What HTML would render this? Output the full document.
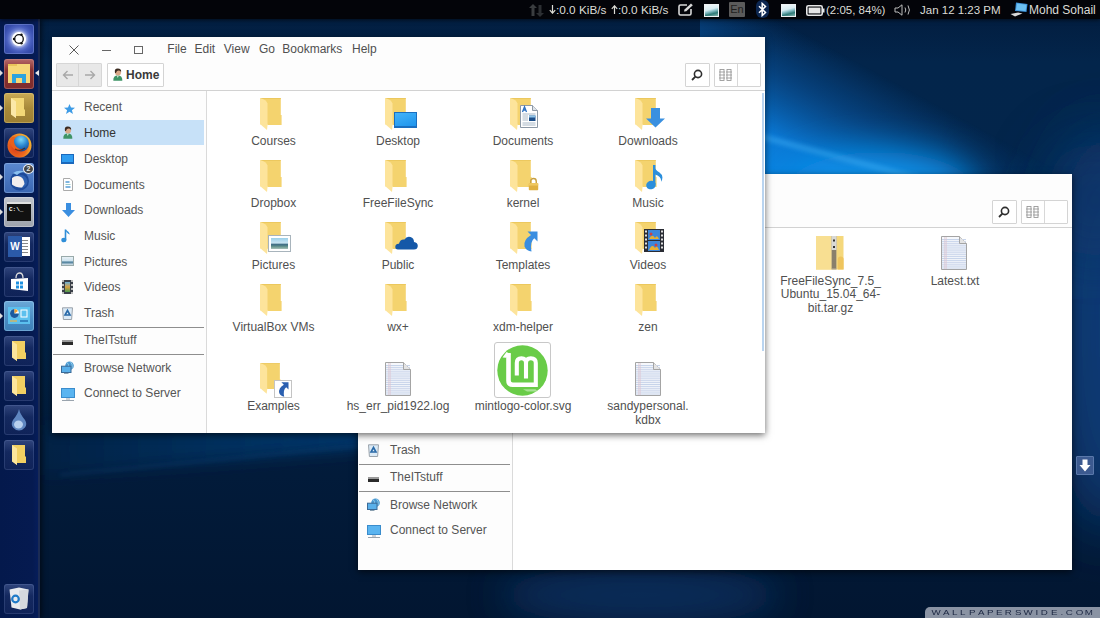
<!DOCTYPE html>
<html><head><meta charset="utf-8"><style>
*{margin:0;padding:0;box-sizing:border-box}
html,body{width:1100px;height:618px;overflow:hidden}
body{position:relative;font-family:"Liberation Sans",sans-serif;background:#03173a}
.a{position:absolute}
.mono{font-family:"Liberation Mono",monospace}
#wall{left:0;top:0;width:1100px;height:618px}
#panel{left:0;top:0;width:1100px;height:19px;background:#030409;box-shadow:0 1px 4px rgba(0,0,0,.6);z-index:2;color:#dcdcd6;font-size:11px;white-space:nowrap}
#panel .t{position:absolute;top:4px;line-height:13px}
#launcher{left:0;top:19px;width:40px;height:599px;background:linear-gradient(90deg,#04194c 0,#051a50 85%,#061d5a 100%);border-right:2px solid #1b2b54;box-shadow:2px 0 5px rgba(0,0,0,.55)}
.tile{position:absolute;left:4px;width:30px;height:30px;border-radius:3px}
.win{background:#fdfdfd;box-shadow:0 2px 7px rgba(0,0,0,.6);overflow:hidden}
.t12{position:absolute;white-space:nowrap;font-size:12px;line-height:14px}
.menu{color:#505050}
.side{color:#555}
.lbl{position:absolute;width:124px;text-align:center;font-size:12px;line-height:13.5px;color:#505050}
.btn{position:absolute;border:1px solid #d4d4d4;background:#fff;border-radius:1px}
</style></head><body>
<svg width="0" height="0" style="position:absolute"><defs>
<symbol id="folder" viewBox="0 0 22 32">
 <path d="M0.5 0 H20.8 V17 H21.6 V27 H7.5 V26.5 H0.5 Z" fill="#f4d36e"/>
 <path d="M0.5 0 H20.8 V0.8 H0.5 Z" fill="#eac65a"/>
 <path d="M0 0 Q6.5 1.5 7.5 5.5 V27.5 L7 32 L0 26 Z" fill="#fde49b"/>
</symbol>
<symbol id="doc" viewBox="0 0 26 34">
 <path d="M0.5 0.5 H18.5 L25.5 7.5 V33.5 H0.5 Z" fill="#f6f8fc" stroke="#a4a4a4" stroke-width="1"/>
 <path d="M1 3.5 H25 M1 5.4 H25 M1 7.3 H25 M1 9.2 H25 M1 11.1 H25 M1 13.0 H25 M1 14.9 H25 M1 16.8 H25 M1 18.7 H25 M1 20.6 H25 M1 22.5 H25 M1 24.4 H25 M1 26.3 H25 M1 28.2 H25 M1 30.1 H25 M1 32.0 H25" stroke="#c2cfe8" stroke-width="0.9"/>
 <path d="M3.8 1 V33 M5.2 1 V33" stroke="#e0c4d0" stroke-width="0.7"/>
 <path d="M18.5 0.5 V7.5 H25.5" fill="#e4e4e4" stroke="#a4a4a4" stroke-width="1"/>
</symbol>
</defs></svg>
<svg id="wall" class="a" width="1100" height="618" viewBox="0 0 1100 618">
<defs>
<linearGradient id="wbase" x1="0" y1="0" x2="0" y2="1">
 <stop offset="0" stop-color="#021b3c"/><stop offset="0.1" stop-color="#03254b"/><stop offset="0.5" stop-color="#03264b"/><stop offset="0.72" stop-color="#021c3c"/><stop offset="1" stop-color="#021631"/>
</linearGradient>
<filter id="b30" x="-50%" y="-50%" width="200%" height="200%"><feGaussianBlur stdDeviation="30"/></filter>
<filter id="b24" x="-50%" y="-50%" width="200%" height="200%"><feGaussianBlur stdDeviation="24"/></filter>
<filter id="b18" x="-50%" y="-50%" width="200%" height="200%"><feGaussianBlur stdDeviation="18"/></filter>
<filter id="b8" x="-50%" y="-50%" width="200%" height="200%"><feGaussianBlur stdDeviation="8"/></filter>
<filter id="b2" x="-50%" y="-50%" width="200%" height="200%"><feGaussianBlur stdDeviation="2"/></filter>
</defs>
<rect width="1100" height="618" fill="url(#wbase)"/>
<linearGradient id="beam" gradientUnits="userSpaceOnUse" x1="887" y1="78" x2="816" y2="210"><stop offset="0" stop-color="#0a5aa8" stop-opacity="0"/><stop offset="0.3" stop-color="#0a5aa8" stop-opacity=".5"/><stop offset="0.7" stop-color="#0a78d4" stop-opacity="1"/><stop offset="1" stop-color="#0a86e4" stop-opacity="1"/></linearGradient><linearGradient id="beamfade" gradientUnits="userSpaceOnUse" x1="700" y1="0" x2="1100" y2="0"><stop offset="0" stop-color="#fff"/><stop offset="0.6" stop-color="#fff"/><stop offset="1" stop-color="#000"/></linearGradient><mask id="bm"><rect x="0" y="0" width="1100" height="618" fill="url(#beamfade)"/></mask><rect x="700" y="19" width="400" height="280" fill="url(#beam)" mask="url(#bm)"/>
<ellipse cx="880" cy="192" rx="95" ry="40" fill="#0c92ea" filter="url(#b18)"/>
<polygon points="740,128 920,176 920,182 740,134" fill="#43b0f5" opacity=".45" filter="url(#b2)"/>
<ellipse cx="1110" cy="330" rx="60" ry="200" fill="#0b3b74" filter="url(#b30)"/><ellipse cx="1095" cy="200" rx="50" ry="60" fill="#073468" filter="url(#b30)" opacity=".6"/>
<linearGradient id="band" x1="0" y1="0" x2="1" y2="0"><stop offset="0" stop-color="#063a70" stop-opacity=".15"/><stop offset="0.5" stop-color="#063a70" stop-opacity=".6"/><stop offset="1" stop-color="#063c74" stop-opacity=".95"/></linearGradient><polygon points="40,425 370,425 370,447 40,476" fill="url(#band)" filter="url(#b8)"/>
<polygon points="60,474 370,444 370,446 60,476" fill="#1a5a98" opacity=".3" filter="url(#b2)"/>
<ellipse cx="640" cy="595" rx="140" ry="30" fill="#083668" filter="url(#b18)" opacity=".7"/>
</svg>
<div id="panel" class="a">
 <svg class="a" style="left:529px;top:4px" width="15" height="13" viewBox="0 0 15 13"><path d="M4 0 L8 4 H5.5 V12 H2.5 V4 H0 Z" fill="#3a3d40"/><path d="M11 13 L7 9 H9.5 V1 H12.5 V9 H15 Z" fill="#2c2f33"/></svg>
 <svg class="a" style="left:549px;top:5px" width="7" height="9" viewBox="0 0 7 9"><path d="M3.5 0 V8 M0.8 5.2 L3.5 8.2 L6.2 5.2" fill="none" stroke="#dcdcd6" stroke-width="1.2"/></svg><span class="t" style="left:556px;font-size:11.8px">:0.0 KiB/s</span>
 <svg class="a" style="left:611px;top:5px" width="7" height="9" viewBox="0 0 7 9"><path d="M3.5 9 V1 M0.8 3.8 L3.5 0.8 L6.2 3.8" fill="none" stroke="#dcdcd6" stroke-width="1.2"/></svg><span class="t" style="left:618px;font-size:11.8px">:0.0 KiB/s</span>
 <svg class="a" style="left:678px;top:3px" width="16" height="13" viewBox="0 0 16 13"><path d="M9 2 H2.5 Q1 2 1 3.5 V10.5 Q1 12 2.5 12 H11.5 Q13 12 13 10.5 V6" fill="none" stroke="#d8d8d8" stroke-width="1.6"/><path d="M6 8.5 L6.5 6.5 L13 0.5 L14.8 2.3 L8.3 8.3 Z" fill="#d8d8d8"/></svg>
 <div class="a" style="left:704px;top:4px;width:15px;height:13px;background:linear-gradient(165deg,#f2f8fa 0,#d8ecf2 40%,#8cc0c8 55%,#2f7a78 75%,#8ab8b0 100%);border:1px solid #eef2f4"></div>
 <div class="a" style="left:729px;top:2px;width:16px;height:15px;background:#5b5b5b;border-radius:1px;color:#1e1e1e;font-size:11px;line-height:15px;text-align:center">En</div>
 <div class="a" style="left:756px;top:0px;width:13px;height:18px;border-radius:6px;background:#0c2650"></div>
 <svg class="a" style="left:757px;top:2px" width="11" height="15" viewBox="0 0 11 15"><path d="M2 4.2 L8.5 10.5 L5.2 13.5 V1.5 L8.5 4.5 L2 10.8" fill="none" stroke="#ffffff" stroke-width="1.5"/></svg>
 <div class="a" style="left:781px;top:4px;width:15px;height:13px;background:linear-gradient(165deg,#f2f8fa 0,#d8ecf2 40%,#8cc0c8 55%,#2f7a78 75%,#8ab8b0 100%);border:1px solid #eef2f4"></div>
 <svg class="a" style="left:806px;top:5px" width="19" height="11" viewBox="0 0 19 11"><rect x="0.8" y="0.8" width="15.4" height="9.4" rx="1.5" fill="none" stroke="#e6e6e6" stroke-width="1.6"/><rect x="2.6" y="2.6" width="11.8" height="5.8" fill="#e6e6e6"/><rect x="16.5" y="3.5" width="2" height="4" fill="#e6e6e6"/></svg>
 <span class="t" style="left:826px;font-size:11.5px">(2:05, 84%)</span>
 <svg class="a" style="left:894px;top:4px" width="18" height="12" viewBox="0 0 18 12"><path d="M1 4 H4 L8 0.8 V11.2 L4 8 H1 Z" fill="none" stroke="#bdbdbd" stroke-width="1"/><path d="M11 3.5 Q12.5 6 11 8.5" fill="none" stroke="#bdbdbd" stroke-width="1"/><path d="M14 1.5 Q16.8 6 14 10.5" fill="none" stroke="#bdbdbd" stroke-width="1"/></svg>
 <span class="t" style="left:920px;font-size:11.5px">Jan 12 1:23 PM</span>
 <svg class="a" style="left:1010px;top:2px" width="18" height="15" viewBox="0 0 18 15"><path d="M6 0.5 L17.5 2 L16.5 10 L5 9 Z" fill="#3a8fd8"/><path d="M7 1.5 L16.5 2.8 L15.6 9 L6 8 Z" fill="#6cc0f2"/><path d="M0.5 12 L8 10.5 L12.5 11.5 L5 14.5 Z" fill="#d9d9d9"/></svg>
 <span class="t" style="left:1029px;font-size:12px">Mohd Sohail</span>
</div>

<div id="launcher" class="a"></div><div id="ltiles"><div class="tile a" style="top:23.5px;background:radial-gradient(circle at 50% 50%,#fff 0,#fff 6.5px,#a8b4e4 7.5px,#6a7ed0 9.5px,#4a60c0 12px,#3a50b0 15px,#2c409c 100%);box-shadow:inset 0 0 0 1px rgba(160,180,240,.35)"><svg class="a" style="left:7px;top:7px" width="16" height="16" viewBox="0 0 16 16"><circle cx="8" cy="8" r="4.3" fill="none" stroke="#111" stroke-width="1.3"/><circle cx="3" cy="8" r="1.2" fill="#111"/><circle cx="10.5" cy="3.7" r="1.2" fill="#111"/><circle cx="10.5" cy="12.3" r="1.2" fill="#111"/></svg></div><div class="tile a" style="top:58.5px;background:linear-gradient(180deg,#b66a6a 0,#8a3434 35%,#7e2b2b 100%);box-shadow:inset 0 0 0 1px rgba(220,160,160,.35)"><div class="a" style="left:4px;top:5px;width:22px;height:19px;background:#f6d878"></div><div class="a" style="left:4px;top:5px;width:9px;height:2px;background:#e9c45a"></div><div class="a" style="left:8px;top:15px;width:14px;height:9px;background:#2aa3df"></div><div class="a" style="left:12px;top:19px;width:6px;height:5px;background:#f6d878"></div></div><div class="tile a" style="top:93px;background:linear-gradient(180deg,#c9aa55 0,#a88a3a 50%,#9c7f33 100%);box-shadow:inset 0 0 0 1px rgba(240,220,150,.35)"><svg class="a" style="left:7px;top:5px" width="15" height="21" viewBox="0 0 15 21"><path d="M0 0 H13 V11 L14 12 V18 H5 L5 20 L0 16 Z" fill="#f3d877"/><path d="M0 0 L5 3.5 V20 L0 16.5 Z" fill="#fbe8a8"/></svg></div><div class="tile a" style="top:128px;background:linear-gradient(180deg,rgba(120,140,200,.38) 0,rgba(60,80,140,.28) 40%,rgba(40,55,110,.3) 100%);box-shadow:inset 0 0 0 1px rgba(150,170,220,.18)"><svg class="a" style="left:2px;top:5px" width="26" height="26" viewBox="0 0 26 26"><defs><radialGradient id="ffo" cx="0.35" cy="0.6" r="0.7"><stop offset="0" stop-color="#d83a1a"/><stop offset="0.6" stop-color="#ee6a1e"/><stop offset="1" stop-color="#f8c030"/></radialGradient><radialGradient id="ffb" cx="0.5" cy="0.25" r="0.8"><stop offset="0" stop-color="#7ad8f8"/><stop offset="0.5" stop-color="#2a86d0"/><stop offset="1" stop-color="#163c88"/></radialGradient></defs><circle cx="13.5" cy="12.5" r="12" fill="url(#ffo)"/><circle cx="15" cy="10.5" r="8" fill="url(#ffb)"/><path d="M4 6 Q6 3 9 4 Q7 8 9 12 Q12 17 18 16 Q14 19 9.5 17 Q4 14 4 6 Z" fill="#e8601c"/><path d="M9 16 Q14 19 19 15" stroke="#3a1c10" stroke-width="1.2" fill="none" opacity=".7"/></svg></div><div class="tile a" style="top:162.5px;background:linear-gradient(180deg,#5a88d0 0,#3a66b2 100%);box-shadow:inset 0 0 0 1px rgba(170,200,240,.4)"><svg class="a" style="left:3px;top:6px" width="24" height="22" viewBox="0 0 24 22"><circle cx="12.5" cy="12" r="9.5" fill="#1d4a9a"/><path d="M6 4 Q12 0 18 3 Q13 3 10 6 Z" fill="#8ac0f0"/><circle cx="14" cy="12.5" r="6.5" fill="#3a70c0" opacity=".6"/><path d="M5 9 Q9 5.5 14 8 Q17 10 17.5 15 L15 18.5 Q9 19 5 15.5 Z" fill="#f2eeee"/></svg><div class="a" style="left:19px;top:1px;width:11px;height:10px;border-radius:50%;background:#444;border:1.5px solid #e8eef8;color:#e8e8e8;font-size:7px;line-height:7px;text-align:center;font-weight:bold">2</div></div><div class="tile a" style="top:197px;background:linear-gradient(180deg,#c0c4cc 0,#9ea3ac 100%);box-shadow:inset 0 0 0 1px rgba(230,230,240,.4)"><div class="a" style="left:3px;top:5px;width:24px;height:3px;background:#e0e0e0"></div><div class="a" style="left:3px;top:7px;width:24px;height:17px;background:#111"></div><div class="a mono" style="left:5px;top:9px;color:#fff;font-size:6px;line-height:7px;font-weight:bold">C:\_</div></div><div class="tile a" style="top:232px;background:linear-gradient(180deg,rgba(120,140,200,.38) 0,rgba(60,80,140,.28) 40%,rgba(40,55,110,.3) 100%);box-shadow:inset 0 0 0 1px rgba(150,170,220,.18)"><div class="a" style="left:16px;top:5px;width:10px;height:19px;background:#fff"></div><div class="a" style="left:18px;top:8px;width:6px;height:13px;background:repeating-linear-gradient(180deg,#888 0,#888 1px,#fff 1px,#fff 3px)"></div><div class="a" style="left:4px;top:4px;width:14px;height:21px;background:#2b5aa8;color:#fff;font-weight:bold;font-size:10px;line-height:21px;text-align:center">W</div></div><div class="tile a" style="top:266.5px;background:linear-gradient(180deg,rgba(120,140,200,.38) 0,rgba(60,80,140,.28) 40%,rgba(40,55,110,.3) 100%);box-shadow:inset 0 0 0 1px rgba(150,170,220,.18)"><svg class="a" style="left:6px;top:5px" width="19" height="21" viewBox="0 0 19 21"><path d="M6 6 Q6 1 9.5 1 Q13 1 13 6" fill="none" stroke="#ddd" stroke-width="1.3"/><path d="M1 7 L18 6 V19 L1 17 Z" fill="#fff"/><rect x="6" y="9.5" width="3" height="3" fill="#1e90e0"/><rect x="10" y="9.5" width="3" height="3" fill="#1e90e0"/><rect x="6" y="13.5" width="3" height="3" fill="#1e90e0"/><rect x="10" y="13.5" width="3" height="3" fill="#1e90e0"/></svg></div><div class="tile a" style="top:301px;background:linear-gradient(180deg,#6aa8d8 0,#4a8cc4 60%,#3c80b8 100%);box-shadow:inset 0 0 0 1px rgba(180,220,250,.4)"><svg class="a" style="left:4px;top:6px" width="22" height="17" viewBox="0 0 22 17"><rect width="22" height="17" fill="#5cc0ee"/><circle cx="6.5" cy="6.5" r="4.5" fill="#fff"/><path d="M6.5 6.5 V2 A4.5 4.5 0 1 0 11 6.5 Z" fill="#1a5aa0"/><path d="M6.5 6.5 V2 A4.5 4.5 0 0 1 10 4 Z" fill="#f0a030"/><rect x="13" y="3" width="6" height="7" fill="none" stroke="#fff" stroke-width="1"/><path d="M2 14 H9" stroke="#f0b040" stroke-width="1.2"/><path d="M12 14 H20" stroke="#1a5aa0" stroke-width="1.2"/></svg></div><div class="tile a" style="top:336px;background:linear-gradient(180deg,rgba(120,140,200,.38) 0,rgba(60,80,140,.28) 40%,rgba(40,55,110,.3) 100%);box-shadow:inset 0 0 0 1px rgba(150,170,220,.18)"><svg class="a" style="left:8px;top:5px" width="15" height="21" viewBox="0 0 15 21"><path d="M0 0 H13 V11 L14 12 V18 H5 L5 20 L0 16 Z" fill="#f1cf62"/><path d="M0 0 L5 3.5 V20 L0 16.5 Z" fill="#fbe59c"/></svg></div><div class="tile a" style="top:370.5px;background:linear-gradient(180deg,rgba(120,140,200,.38) 0,rgba(60,80,140,.28) 40%,rgba(40,55,110,.3) 100%);box-shadow:inset 0 0 0 1px rgba(150,170,220,.18)"><svg class="a" style="left:8px;top:5px" width="15" height="21" viewBox="0 0 15 21"><path d="M0 0 H13 V11 L14 12 V18 H5 L5 20 L0 16 Z" fill="#f1cf62"/><path d="M0 0 L5 3.5 V20 L0 16.5 Z" fill="#fbe59c"/></svg></div><div class="tile a" style="top:440px;background:linear-gradient(180deg,rgba(120,140,200,.38) 0,rgba(60,80,140,.28) 40%,rgba(40,55,110,.3) 100%);box-shadow:inset 0 0 0 1px rgba(150,170,220,.18)"><svg class="a" style="left:8px;top:5px" width="15" height="21" viewBox="0 0 15 21"><path d="M0 0 H13 V11 L14 12 V18 H5 L5 20 L0 16 Z" fill="#f1cf62"/><path d="M0 0 L5 3.5 V20 L0 16.5 Z" fill="#fbe59c"/></svg></div><div class="tile a" style="top:405px;background:linear-gradient(180deg,rgba(120,140,200,.38) 0,rgba(60,80,140,.28) 40%,rgba(40,55,110,.3) 100%);box-shadow:inset 0 0 0 1px rgba(150,170,220,.18)"><svg class="a" style="left:7px;top:4px" width="16" height="22" viewBox="0 0 16 22"><path d="M8 0 Q9 5 14 11 Q16.5 15 14 18.5 Q11.5 21.5 8 21.5 Q4.5 21.5 2 18.5 Q-0.5 15 2 11 Q7 5 8 0 Z" fill="#5f86c0"/><ellipse cx="7.5" cy="15.5" rx="4.5" ry="4" fill="#b8d0ee"/></svg></div><div class="tile a" style="top:584.0px;background:linear-gradient(180deg,rgba(120,140,200,.38) 0,rgba(60,80,140,.28) 40%,rgba(40,55,110,.3) 100%);box-shadow:inset 0 0 0 1px rgba(150,170,220,.18)"><svg class="a" style="left:5px;top:3px" width="20" height="23" viewBox="0 0 20 23"><path d="M0.5 2.5 L10 0.5 L19.5 2.5 L18 21 L11 22.5 L2.5 20.5 Z" fill="#e8eaee"/><path d="M10 3.5 L19.5 2.5 L18 21 L11 22.5 Z" fill="#d4d8de"/><circle cx="6.5" cy="12" r="3.3" fill="none" stroke="#1e7ac8" stroke-width="2.2"/></svg></div><div class="a" style="left:35px;top:70px;width:0;height:0;border-top:3.5px solid transparent;border-bottom:3.5px solid transparent;border-right:4px solid #e8e8e8"></div><div class="a" style="left:0;top:70px;width:0;height:0;border-top:3px solid transparent;border-bottom:3px solid transparent;border-left:3px solid #ddd"></div><div class="a" style="left:0;top:105px;width:0;height:0;border-top:3px solid transparent;border-bottom:3px solid transparent;border-left:3px solid #ddd"></div><div class="a" style="left:0;top:174px;width:0;height:0;border-top:3px solid transparent;border-bottom:3px solid transparent;border-left:3px solid #ddd"></div><div class="a" style="left:0;top:209px;width:0;height:0;border-top:3px solid transparent;border-bottom:3px solid transparent;border-left:3px solid #ddd"></div><div class="a" style="left:0;top:313px;width:0;height:0;border-top:3px solid transparent;border-bottom:3px solid transparent;border-left:3px solid #ddd"></div></div>
<div class="a win" style="left:358px;top:174px;width:714px;height:396px"><svg class="a" style="left:16.0px;top:7.0px" width="12" height="12" viewBox="0 0 12 12"><path d="M1.5 1.5 L10.5 10.5 M10.5 1.5 L1.5 10.5" stroke="#5a5a5a" stroke-width="1"/></svg><div class="a" style="left:50.0px;top:13.0px;width:9px;height:1px;background:#666"></div><div class="a" style="left:82.0px;top:9.0px;width:9px;height:8px;border:1px solid #666"></div><div class="t12 menu" style="left:115.3px;top:4.8px;">File</div><div class="t12 menu" style="left:142.5px;top:4.8px;">Edit</div><div class="t12 menu" style="left:171.8px;top:4.8px;">View</div><div class="t12 menu" style="left:206.9px;top:4.8px;">Go</div><div class="t12 menu" style="left:230.3px;top:4.8px;">Bookmarks</div><div class="t12 menu" style="left:300.0px;top:4.8px;">Help</div><div class="btn" style="left:4.0px;top:26.0px;width:46px;height:24px;background:#e8e8e8;border-color:#d6d6d6"></div><div class="a" style="left:26.0px;top:27.0px;width:1px;height:22px;background:#d6d6d6"></div><svg class="a" style="left:10.0px;top:33.0px" width="12" height="10" viewBox="0 0 12 10"><path d="M11 5 H1.5 M5.5 1 L1.5 5 L5.5 9" fill="none" stroke="#a8a8a8" stroke-width="1.4"/></svg><svg class="a" style="left:32.0px;top:33.0px" width="12" height="10" viewBox="0 0 12 10"><path d="M1 5 H10.5 M6.5 1 L10.5 5 L6.5 9" fill="none" stroke="#a8a8a8" stroke-width="1.4"/></svg><div class="btn" style="left:634.0px;top:26.0px;width:25px;height:24px"></div><svg class="a" style="left:640.0px;top:32.0px" width="12" height="12" viewBox="0 0 12 12"><circle cx="7" cy="5" r="3.6" fill="none" stroke="#2e2e2e" stroke-width="1.6"/><path d="M4.4 7.6 L1 11" stroke="#2e2e2e" stroke-width="1.8"/></svg><div class="btn" style="left:663.0px;top:26.0px;width:47px;height:24px"></div><div class="a" style="left:686.0px;top:27.0px;width:1px;height:22px;background:#d8d8d8"></div><svg class="a" style="left:668.0px;top:32.0px" width="14" height="12" viewBox="0 0 14 12"><g fill="none" stroke="#9a9a9a" stroke-width="0.9"><rect x="1" y="0.5" width="4" height="11"/><rect x="8" y="0.5" width="4" height="11"/><path d="M0 3 H6 M0 6 H6 M0 9 H6 M7 3 H13 M7 6 H13 M7 9 H13"/></g></svg><div class="a" style="left:0;top:53.0px;width:714px;height:1px;background:#d2d2d2"></div><div class="a" style="left:155.0px;top:54.0px;width:558.0px;height:400px;background:#ffffff"></div><div class="a" style="left:154.0px;top:54.0px;width:1px;height:400px;background:#dadada"></div><div class="t12 side" style="left:32.0px;top:63.3px;">Recent</div><div class="t12 side" style="left:32.0px;top:89.1px;">Home</div><div class="t12 side" style="left:32.0px;top:114.8px;">Desktop</div><div class="t12 side" style="left:32.0px;top:140.5px;">Documents</div><div class="t12 side" style="left:32.0px;top:166.2px;">Downloads</div><div class="t12 side" style="left:32.0px;top:191.9px;">Music</div><div class="t12 side" style="left:32.0px;top:217.6px;">Pictures</div><div class="t12 side" style="left:32.0px;top:243.3px;">Videos</div><div class="t12 side" style="left:32.0px;top:269.0px;">Trash</div><div class="t12 side" style="left:32.0px;top:296.3px;">TheITstuff</div><div class="t12 side" style="left:32.0px;top:323.6px;">Browse Network</div><div class="t12 side" style="left:32.0px;top:349.3px;">Connect to Server</div><div class="a" style="left:1.0px;top:289.5px;width:151px;height:1px;background:#8e8e8e"></div><div class="a" style="left:1.0px;top:316.5px;width:151px;height:1px;background:#8e8e8e"></div><svg class="a" style="left:12.0px;top:67.0px" width="11" height="10" viewBox="0 0 11 10"><path d="M5.5 0 L7 3.6 L11 3.8 L7.9 6.2 L9 10 L5.5 7.8 L2 10 L3.1 6.2 L0 3.8 L4 3.6 Z" fill="#3d9be6"/></svg><svg class="a" style="left:11.0px;top:89.0px" width="10" height="13" viewBox="0 0 10 13"><path d="M0.3 12.8 Q0 7.5 4.8 7.3 Q9.6 7.5 9.3 12.8 Z" fill="#3e9466"/><path d="M3.8 7.5 L4.8 10 L5.8 7.5 Z" fill="#d8efe0"/><ellipse cx="5" cy="4.2" rx="3" ry="3.3" fill="#d9a888"/><path d="M1.9 4.6 Q1.2 0.6 4.6 0.5 Q8.6 0.4 8.1 4.2 Q7.6 2.4 5.6 2.6 Q3.6 2.6 3.2 4.6 Q2.6 5.6 1.9 4.6 Z" fill="#3a2a20"/></svg><div class="a" style="left:9.0px;top:117.0px;width:13px;height:10px;background:#2e9cf0;border:1px solid #1a68bc;border-bottom-width:2px"></div><svg class="a" style="left:11.0px;top:141.0px" width="10" height="13" viewBox="0 0 10 13"><path d="M0.5 0.5 H7 L9.5 3 V12.5 H0.5 Z" fill="#fff" stroke="#aaa" stroke-width="1"/><rect x="2.5" y="3" width="4" height="2" fill="#7fb4e0"/><rect x="2.5" y="6" width="5" height="1" fill="#9cc"/><rect x="2.5" y="8" width="5" height="2" fill="#7fb4e0"/></svg><svg class="a" style="left:9.5px;top:166.0px" width="13" height="14" viewBox="0 0 13 14"><path d="M4 0 H9 V7 H13 L6.5 14 L0 7 H4 Z" fill="#3a8ee0"/></svg><svg class="a" style="left:9.0px;top:192.0px" width="10" height="14" viewBox="0 0 10 14"><path d="M4.5 0.5 V10.5" stroke="#2f8ed8" stroke-width="1.6"/><ellipse cx="2.9" cy="11" rx="2.6" ry="2.3" fill="#2f8ed8"/><path d="M4.5 0.5 Q5 4 9 5.5 Q8.5 3 4.5 0.5 Z" fill="#2f8ed8"/></svg><div class="a" style="left:9.0px;top:219.0px;width:13px;height:10px;border:1px solid #9aa;background:linear-gradient(180deg,#eaf2f6 0,#cfe3ee 45%,#4a7d9a 65%,#dfe8ee 100%)"></div><div class="a" style="left:10.0px;top:243.0px;width:11px;height:14px;background:#3a3f48;border-left:2px dotted #bbb;border-right:2px dotted #bbb"></div><div class="a" style="left:13.0px;top:245.0px;width:5px;height:10px;background:linear-gradient(180deg,#6ab0d8,#d9a040,#4a9a50)"></div><svg class="a" style="left:10.0px;top:270.3px" width="11" height="13" viewBox="0 0 11 13"><path d="M0.5 0.8 H10.5 L9.6 12.5 H1.4 Z" fill="#dbeaf6" stroke="#9aa2aa" stroke-width="1"/><path d="M5.5 3.5 L8 8 H3 Z" fill="none" stroke="#2a6aa8" stroke-width="1.6"/></svg><div class="a" style="left:10.0px;top:303.0px;width:11px;height:5px;background:linear-gradient(180deg,#9a9a9a 0,#9a9a9a 40%,#2a2a2a 40%)"></div><svg class="a" style="left:9.0px;top:324.0px" width="14" height="13" viewBox="0 0 14 13"><circle cx="8.5" cy="4.8" r="4.3" fill="#4a98d0"/><path d="M6 1.5 Q8 3 7.5 6 M9.5 0.8 Q12 3 11 7.5" stroke="#a8d8f0" stroke-width="0.8" fill="none"/><rect x="0.5" y="5.2" width="9.5" height="6.3" fill="#5ab0ea" stroke="#3a6a98" stroke-width="1"/><path d="M3 12.5 H7.5" stroke="#8aa0b0" stroke-width="1"/></svg><svg class="a" style="left:9.0px;top:350.5px" width="14" height="13" viewBox="0 0 14 13"><rect x="0.5" y="0.5" width="13" height="9" fill="#5ab4f0" stroke="#3a8ccc" stroke-width="1"/><path d="M5 11 H9 M1 12.5 H13" stroke="#9aa4ae" stroke-width="1"/></svg><svg class="a" style="left:458.2px;top:62.2px" width="28" height="34" viewBox="0 0 28 34"><rect x="0" y="0" width="27.5" height="33.5" fill="#f5d87c"/><rect x="0" y="0" width="15.5" height="33.5" fill="#f8df92"/><rect x="15.5" y="0" width="5" height="33.5" fill="#a49a86"/><path d="M16 15 H20 M16 17 H20 M16 19 H20 M16 21 H20 M16 23 H20 M16 25 H20 M16 27 H20 M16 29 H20 M16 31 H20" stroke="#6a604c" stroke-width="0.9"/><rect x="15.5" y="0" width="5" height="14" fill="#d8d8d4"/><rect x="17" y="3.5" width="2" height="2" fill="#333"/><rect x="17" y="10" width="2" height="2" fill="#333"/><path d="M21.8 33.5 V23 Q21.8 20.5 24.7 20.5 Q27.6 20.5 27.6 23 V33.5 Z" fill="#efc55e"/></svg><div class="lbl" style="left:410.5px;top:100.7px">FreeFileSync_7.5_<br>Ubuntu_15.04_64-<br>bit.tar.gz</div><svg class="a" style="left:583.0px;top:62.0px" width="26" height="34"><use href="#doc"/></svg><div class="lbl" style="left:535.0px;top:100.7px">Latest.txt</div></div>
<div class="a win" style="left:52px;top:37px;width:713px;height:396px"><svg class="a" style="left:16.0px;top:7.0px" width="12" height="12" viewBox="0 0 12 12"><path d="M1.5 1.5 L10.5 10.5 M10.5 1.5 L1.5 10.5" stroke="#5a5a5a" stroke-width="1"/></svg><div class="a" style="left:50.0px;top:13.0px;width:9px;height:1px;background:#666"></div><div class="a" style="left:82.0px;top:9.0px;width:9px;height:8px;border:1px solid #666"></div><div class="t12 menu" style="left:115.3px;top:4.8px;">File</div><div class="t12 menu" style="left:142.5px;top:4.8px;">Edit</div><div class="t12 menu" style="left:171.8px;top:4.8px;">View</div><div class="t12 menu" style="left:206.9px;top:4.8px;">Go</div><div class="t12 menu" style="left:230.3px;top:4.8px;">Bookmarks</div><div class="t12 menu" style="left:300.0px;top:4.8px;">Help</div><div class="btn" style="left:4.0px;top:26.0px;width:46px;height:24px;background:#e8e8e8;border-color:#d6d6d6"></div><div class="a" style="left:26.0px;top:27.0px;width:1px;height:22px;background:#d6d6d6"></div><svg class="a" style="left:10.0px;top:33.0px" width="12" height="10" viewBox="0 0 12 10"><path d="M11 5 H1.5 M5.5 1 L1.5 5 L5.5 9" fill="none" stroke="#a8a8a8" stroke-width="1.4"/></svg><svg class="a" style="left:32.0px;top:33.0px" width="12" height="10" viewBox="0 0 12 10"><path d="M1 5 H10.5 M6.5 1 L10.5 5 L6.5 9" fill="none" stroke="#a8a8a8" stroke-width="1.4"/></svg><div class="btn" style="left:55.0px;top:26.0px;width:57px;height:24px"></div><svg class="a" style="left:60.5px;top:31.0px" width="10" height="13" viewBox="0 0 10 13"><path d="M0.3 12.8 Q0 7.5 4.8 7.3 Q9.6 7.5 9.3 12.8 Z" fill="#3e9466"/><path d="M3.8 7.5 L4.8 10 L5.8 7.5 Z" fill="#d8efe0"/><ellipse cx="5" cy="4.2" rx="3" ry="3.3" fill="#d9a888"/><path d="M1.9 4.6 Q1.2 0.6 4.6 0.5 Q8.6 0.4 8.1 4.2 Q7.6 2.4 5.6 2.6 Q3.6 2.6 3.2 4.6 Q2.6 5.6 1.9 4.6 Z" fill="#3a2a20"/></svg><div class="t12 " style="left:74.0px;top:30.5px;font-weight:bold;color:#3a3a3a">Home</div><div class="btn" style="left:633.0px;top:26.0px;width:25px;height:24px"></div><svg class="a" style="left:639.0px;top:32.0px" width="12" height="12" viewBox="0 0 12 12"><circle cx="7" cy="5" r="3.6" fill="none" stroke="#2e2e2e" stroke-width="1.6"/><path d="M4.4 7.6 L1 11" stroke="#2e2e2e" stroke-width="1.8"/></svg><div class="btn" style="left:662.0px;top:26.0px;width:47px;height:24px"></div><div class="a" style="left:685.0px;top:27.0px;width:1px;height:22px;background:#d8d8d8"></div><svg class="a" style="left:667.0px;top:32.0px" width="14" height="12" viewBox="0 0 14 12"><g fill="none" stroke="#9a9a9a" stroke-width="0.9"><rect x="1" y="0.5" width="4" height="11"/><rect x="8" y="0.5" width="4" height="11"/><path d="M0 3 H6 M0 6 H6 M0 9 H6 M7 3 H13 M7 6 H13 M7 9 H13"/></g></svg><div class="a" style="left:0;top:53.0px;width:714px;height:1px;background:#d2d2d2"></div><div class="a" style="left:155.0px;top:54.0px;width:558.0px;height:400px;background:#ffffff"></div><div class="a" style="left:154.0px;top:54.0px;width:1px;height:400px;background:#dadada"></div><div class="a" style="left:0;top:83.0px;width:152.0px;height:25px;background:#c7e1f8"></div><div class="t12 side" style="left:32.0px;top:63.3px;">Recent</div><div class="t12 side" style="left:32.0px;top:89.1px;color:#333">Home</div><div class="t12 side" style="left:32.0px;top:114.8px;">Desktop</div><div class="t12 side" style="left:32.0px;top:140.5px;">Documents</div><div class="t12 side" style="left:32.0px;top:166.2px;">Downloads</div><div class="t12 side" style="left:32.0px;top:191.9px;">Music</div><div class="t12 side" style="left:32.0px;top:217.6px;">Pictures</div><div class="t12 side" style="left:32.0px;top:243.3px;">Videos</div><div class="t12 side" style="left:32.0px;top:269.0px;">Trash</div><div class="t12 side" style="left:32.0px;top:296.3px;">TheITstuff</div><div class="t12 side" style="left:32.0px;top:323.6px;">Browse Network</div><div class="t12 side" style="left:32.0px;top:349.3px;">Connect to Server</div><div class="a" style="left:1.0px;top:289.5px;width:151px;height:1px;background:#8e8e8e"></div><div class="a" style="left:1.0px;top:316.5px;width:151px;height:1px;background:#8e8e8e"></div><svg class="a" style="left:12.0px;top:67.0px" width="11" height="10" viewBox="0 0 11 10"><path d="M5.5 0 L7 3.6 L11 3.8 L7.9 6.2 L9 10 L5.5 7.8 L2 10 L3.1 6.2 L0 3.8 L4 3.6 Z" fill="#3d9be6"/></svg><svg class="a" style="left:11.0px;top:89.0px" width="10" height="13" viewBox="0 0 10 13"><path d="M0.3 12.8 Q0 7.5 4.8 7.3 Q9.6 7.5 9.3 12.8 Z" fill="#3e9466"/><path d="M3.8 7.5 L4.8 10 L5.8 7.5 Z" fill="#d8efe0"/><ellipse cx="5" cy="4.2" rx="3" ry="3.3" fill="#d9a888"/><path d="M1.9 4.6 Q1.2 0.6 4.6 0.5 Q8.6 0.4 8.1 4.2 Q7.6 2.4 5.6 2.6 Q3.6 2.6 3.2 4.6 Q2.6 5.6 1.9 4.6 Z" fill="#3a2a20"/></svg><div class="a" style="left:9.0px;top:117.0px;width:13px;height:10px;background:#2e9cf0;border:1px solid #1a68bc;border-bottom-width:2px"></div><svg class="a" style="left:11.0px;top:141.0px" width="10" height="13" viewBox="0 0 10 13"><path d="M0.5 0.5 H7 L9.5 3 V12.5 H0.5 Z" fill="#fff" stroke="#aaa" stroke-width="1"/><rect x="2.5" y="3" width="4" height="2" fill="#7fb4e0"/><rect x="2.5" y="6" width="5" height="1" fill="#9cc"/><rect x="2.5" y="8" width="5" height="2" fill="#7fb4e0"/></svg><svg class="a" style="left:9.5px;top:166.0px" width="13" height="14" viewBox="0 0 13 14"><path d="M4 0 H9 V7 H13 L6.5 14 L0 7 H4 Z" fill="#3a8ee0"/></svg><svg class="a" style="left:9.0px;top:192.0px" width="10" height="14" viewBox="0 0 10 14"><path d="M4.5 0.5 V10.5" stroke="#2f8ed8" stroke-width="1.6"/><ellipse cx="2.9" cy="11" rx="2.6" ry="2.3" fill="#2f8ed8"/><path d="M4.5 0.5 Q5 4 9 5.5 Q8.5 3 4.5 0.5 Z" fill="#2f8ed8"/></svg><div class="a" style="left:9.0px;top:219.0px;width:13px;height:10px;border:1px solid #9aa;background:linear-gradient(180deg,#eaf2f6 0,#cfe3ee 45%,#4a7d9a 65%,#dfe8ee 100%)"></div><div class="a" style="left:10.0px;top:243.0px;width:11px;height:14px;background:#3a3f48;border-left:2px dotted #bbb;border-right:2px dotted #bbb"></div><div class="a" style="left:13.0px;top:245.0px;width:5px;height:10px;background:linear-gradient(180deg,#6ab0d8,#d9a040,#4a9a50)"></div><svg class="a" style="left:10.0px;top:270.3px" width="11" height="13" viewBox="0 0 11 13"><path d="M0.5 0.8 H10.5 L9.6 12.5 H1.4 Z" fill="#dbeaf6" stroke="#9aa2aa" stroke-width="1"/><path d="M5.5 3.5 L8 8 H3 Z" fill="none" stroke="#2a6aa8" stroke-width="1.6"/></svg><div class="a" style="left:10.0px;top:303.0px;width:11px;height:5px;background:linear-gradient(180deg,#9a9a9a 0,#9a9a9a 40%,#2a2a2a 40%)"></div><svg class="a" style="left:9.0px;top:324.0px" width="14" height="13" viewBox="0 0 14 13"><circle cx="8.5" cy="4.8" r="4.3" fill="#4a98d0"/><path d="M6 1.5 Q8 3 7.5 6 M9.5 0.8 Q12 3 11 7.5" stroke="#a8d8f0" stroke-width="0.8" fill="none"/><rect x="0.5" y="5.2" width="9.5" height="6.3" fill="#5ab0ea" stroke="#3a6a98" stroke-width="1"/><path d="M3 12.5 H7.5" stroke="#8aa0b0" stroke-width="1"/></svg><svg class="a" style="left:9.0px;top:350.5px" width="14" height="13" viewBox="0 0 14 13"><rect x="0.5" y="0.5" width="13" height="9" fill="#5ab4f0" stroke="#3a8ccc" stroke-width="1"/><path d="M5 11 H9 M1 12.5 H13" stroke="#9aa4ae" stroke-width="1"/></svg><svg class="a" style="left:208.2px;top:61.0px" width="22" height="32"><use href="#folder"/></svg><div class="lbl" style="left:159.5px;top:97.9px">Courses</div><svg class="a" style="left:332.7px;top:61.0px" width="22" height="32"><use href="#folder"/></svg><div class="lbl" style="left:284.0px;top:97.9px">Desktop</div><svg class="a" style="left:457.7px;top:61.0px" width="22" height="32"><use href="#folder"/></svg><div class="lbl" style="left:409.0px;top:97.9px">Documents</div><svg class="a" style="left:582.7px;top:61.0px" width="22" height="32"><use href="#folder"/></svg><div class="lbl" style="left:534.0px;top:97.9px">Downloads</div><svg class="a" style="left:208.2px;top:123.0px" width="22" height="32"><use href="#folder"/></svg><div class="lbl" style="left:159.5px;top:159.9px">Dropbox</div><svg class="a" style="left:332.7px;top:123.0px" width="22" height="32"><use href="#folder"/></svg><div class="lbl" style="left:284.0px;top:159.9px">FreeFileSync</div><svg class="a" style="left:457.7px;top:123.0px" width="22" height="32"><use href="#folder"/></svg><div class="lbl" style="left:409.0px;top:159.9px">kernel</div><svg class="a" style="left:582.7px;top:123.0px" width="22" height="32"><use href="#folder"/></svg><div class="lbl" style="left:534.0px;top:159.9px">Music</div><svg class="a" style="left:208.2px;top:185.0px" width="22" height="32"><use href="#folder"/></svg><div class="lbl" style="left:159.5px;top:221.9px">Pictures</div><svg class="a" style="left:332.7px;top:185.0px" width="22" height="32"><use href="#folder"/></svg><div class="lbl" style="left:284.0px;top:221.9px">Public</div><svg class="a" style="left:457.7px;top:185.0px" width="22" height="32"><use href="#folder"/></svg><div class="lbl" style="left:409.0px;top:221.9px">Templates</div><svg class="a" style="left:582.7px;top:185.0px" width="22" height="32"><use href="#folder"/></svg><div class="lbl" style="left:534.0px;top:221.9px">Videos</div><svg class="a" style="left:208.2px;top:247.0px" width="22" height="32"><use href="#folder"/></svg><div class="lbl" style="left:159.5px;top:283.9px">VirtualBox VMs</div><svg class="a" style="left:332.7px;top:247.0px" width="22" height="32"><use href="#folder"/></svg><div class="lbl" style="left:284.0px;top:283.9px">wx+</div><svg class="a" style="left:457.7px;top:247.0px" width="22" height="32"><use href="#folder"/></svg><div class="lbl" style="left:409.0px;top:283.9px">xdm-helper</div><svg class="a" style="left:582.7px;top:247.0px" width="22" height="32"><use href="#folder"/></svg><div class="lbl" style="left:534.0px;top:283.9px">zen</div><div class="a" style="left:341.5px;top:74.8px;width:23px;height:16px;background:linear-gradient(160deg,#44b4fa,#1e94ec);border:1px solid #1a6fc0;border-bottom-width:2px"></div><svg class="a" style="left:468.0px;top:68.0px" width="18" height="23" viewBox="0 0 18 23"><path d="M0.5 0.5 H12.5 L17.5 5.5 V22.5 H0.5 Z" fill="#fff" stroke="#8d99a6" stroke-width="1"/><path d="M12.5 0.5 V5.5 H17.5" fill="#dfe4ea" stroke="#8d99a6" stroke-width="1"/><path d="M2.5 7 L4.5 1.8 L6.5 7 M3.2 5 H5.8" stroke="#2a6fc0" fill="none" stroke-width="1.3"/><path d="M2.5 9 H15.5 M2.5 11 H8 M2.5 13 H8 M2.5 15 H8 M2.5 18 H15.5 M2.5 20 H15.5" stroke="#9fb0c0" stroke-width="0.9"/><rect x="9" y="10.5" width="6.5" height="5.5" fill="#1d4f8a"/><rect x="9" y="10.5" width="6.5" height="2" fill="#8fc4e8"/></svg><svg class="a" style="left:593.7px;top:71.3px" width="19" height="20" viewBox="0 0 19 20"><path d="M5 0 H14 V10.5 H19 L9.5 19.5 L0 10.5 H5 Z" fill="#3a90e0"/></svg><svg class="a" style="left:476.0px;top:140.0px" width="11" height="14" viewBox="0 0 14 16"><path d="M3.5 7 V4.5 Q3.5 1 7 1 Q10.5 1 10.5 4.5 V7" fill="none" stroke="#c8a040" stroke-width="1.8"/><rect x="1" y="7" width="12" height="9" rx="1" fill="#e0b040"/><rect x="1" y="7" width="12" height="3" fill="#f0c860"/></svg><svg class="a" style="left:593.5px;top:127.0px" width="18" height="26" viewBox="0 0 18 26"><path d="M8.2 1 V20" stroke="#2b8fdc" stroke-width="2.4"/><ellipse cx="5" cy="21" rx="4.8" ry="4.2" fill="#2b8fdc" transform="rotate(-20 5 21)"/><path d="M7.2 0.5 Q8.5 5.5 13.5 8.5 Q18.5 12 15 18 Q16 12.5 9 10.5 Z" fill="#2b8fdc"/></svg><div class="a" style="left:216.0px;top:198.0px;width:23px;height:17px;border:1px solid #a8b4bc;background:#fff;padding:2px"><div style="width:100%;height:100%;background:linear-gradient(180deg,#9ad0ea 0,#c8e4f2 45%,#3a6a80 60%,#6a9890 80%,#a8c0b8 100%)"></div></div><svg class="a" style="left:342.5px;top:199.0px" width="23" height="14" viewBox="0 0 23 14"><path d="M3 13.5 Q0 13.5 0.3 10.5 Q0.8 7.5 4 7.8 Q5 3 9.5 3.5 Q11.5 0 15.5 1 Q19 2 19 6 Q22.8 6.5 22.8 10 Q22.5 13.5 19 13.5 Z" fill="#1458a8"/></svg><svg class="a" style="left:470.8px;top:194.3px" width="15" height="21" viewBox="0 0 15 21"><path d="M4.5 0.5 H14.5 V10.5 L11.3 7.3 Q6.5 11 8.5 20.5 Q3.5 20 1.5 15.5 Q0 9 8 4 Z" fill="#3a8ee0"/></svg><svg class="a" style="left:592.0px;top:192.0px" width="20" height="23" viewBox="0 0 20 23"><rect x="0" y="0" width="20" height="23" fill="#2a2c34"/><g fill="#e0e0e0"><rect x="1" y="1.5" width="2" height="2"/><rect x="1" y="5.5" width="2" height="2"/><rect x="1" y="9.5" width="2" height="2"/><rect x="1" y="13.5" width="2" height="2"/><rect x="1" y="17.5" width="2" height="2"/><rect x="17" y="1.5" width="2" height="2"/><rect x="17" y="5.5" width="2" height="2"/><rect x="17" y="9.5" width="2" height="2"/><rect x="17" y="13.5" width="2" height="2"/><rect x="17" y="17.5" width="2" height="2"/></g><rect x="4" y="1" width="12" height="10" fill="#3d86d8"/><rect x="4" y="12" width="12" height="10" fill="#3d86d8"/><path d="M5 10 Q8 4 11 9 Q13 5 15 10 Z M5 21 Q8 14 11 19 Q13 15 15 21 Z" fill="#e8b030"/><circle cx="7" cy="5" r="1.5" fill="#d04040"/><circle cx="12" cy="16" r="1.5" fill="#d04040"/></svg><svg class="a" style="left:207.8px;top:326.0px" width="21" height="31"><use href="#folder"/></svg><div class="a" style="left:221.7px;top:342.6px;width:18px;height:18px;background:#fff;border:1px solid #c4c4c4"></div><svg class="a" style="left:225.0px;top:344.5px" width="13" height="15" viewBox="0 0 15 21"><path d="M4.5 0.5 H14.5 V10.5 L11.3 7.3 Q6.5 11 8.5 20.5 Q3.5 20 1.5 15.5 Q0 9 8 4 Z" fill="#2a5fb0"/></svg><div class="lbl" style="left:159.5px;top:363.1px">Examples</div><svg class="a" style="left:333.0px;top:324.8px" width="26" height="34"><use href="#doc"/></svg><div class="lbl" style="left:284.0px;top:363.1px">hs_err_pid1922.log</div><div class="a" style="left:442.0px;top:305.0px;width:57px;height:56px;border:1px solid #c8c8c8;background:#fff;border-radius:3px"></div><svg class="a" style="left:445.0px;top:307.5px" width="51" height="51" viewBox="0 0 51 51"><circle cx="25.5" cy="25.5" r="25.2" fill="#69cc48"/><path d="M11.5 8 V35.5 Q11.5 39.8 15.8 39.8 H38" fill="none" stroke="#fff" stroke-width="4.6"/><path d="M5.5 12.5 L9.5 7 L13.8 9.2 L9 12.8 Z" fill="#fff"/><path d="M19.8 30.5 V18 Q19.8 13.3 24.4 13.3 Q29 13.3 29 18 V33.5 M29 18 Q29 13.3 33.8 13.3 Q38.8 13.3 38.8 18 V42" fill="none" stroke="#fff" stroke-width="4.1"/><path d="M26 44.2 L38.5 44.2 L41 46.5 L30 46.5 Z" fill="#e8f8e0" opacity=".5"/></svg><div class="lbl" style="left:409.0px;top:363.4px">mintlogo-color.svg</div><svg class="a" style="left:582.5px;top:324.8px" width="26" height="34"><use href="#doc"/></svg><div class="lbl" style="left:534.0px;top:363.4px">sandypersonal.<br>kdbx</div><div class="a" style="left:710.0px;top:56.0px;width:2px;height:258px;background:#b9d4f0"></div></div>
<div class="a" style="left:1076px;top:456px;width:18px;height:19px;background:#3c5a90;border:1px solid #5a78aa;border-radius:1px"></div><svg class="a" style="left:1079px;top:459px" width="12" height="13" viewBox="0 0 12 13"><path d="M3.5 0.5 H8.5 V6 H11.5 L6 12.5 L0.5 6 H3.5 Z" fill="#fff"/></svg><div class="a" style="left:925px;top:607px;width:175px;height:11px;background:#8a93a3;border-top-left-radius:5px"></div><div class="a" style="left:933px;top:609px;width:159px;height:7px;display:flex;justify-content:space-between;color:#1a2540;font-size:6.5px;line-height:7px"><span style="display:inline-block;transform:scaleX(1.5)">W</span><span style="display:inline-block;transform:scaleX(1.5)">A</span><span style="display:inline-block;transform:scaleX(1.5)">L</span><span style="display:inline-block;transform:scaleX(1.5)">L</span><span style="display:inline-block;transform:scaleX(1.5)">P</span><span style="display:inline-block;transform:scaleX(1.5)">A</span><span style="display:inline-block;transform:scaleX(1.5)">P</span><span style="display:inline-block;transform:scaleX(1.5)">E</span><span style="display:inline-block;transform:scaleX(1.5)">R</span><span style="display:inline-block;transform:scaleX(1.5)">S</span><span style="display:inline-block;transform:scaleX(1.5)">W</span><span style="display:inline-block;transform:scaleX(1.5)">I</span><span style="display:inline-block;transform:scaleX(1.5)">D</span><span style="display:inline-block;transform:scaleX(1.5)">E</span><span style="display:inline-block;transform:scaleX(1.5)">.</span><span style="display:inline-block;transform:scaleX(1.5)">C</span><span style="display:inline-block;transform:scaleX(1.5)">O</span><span style="display:inline-block;transform:scaleX(1.5)">M</span></div>
</body></html>
